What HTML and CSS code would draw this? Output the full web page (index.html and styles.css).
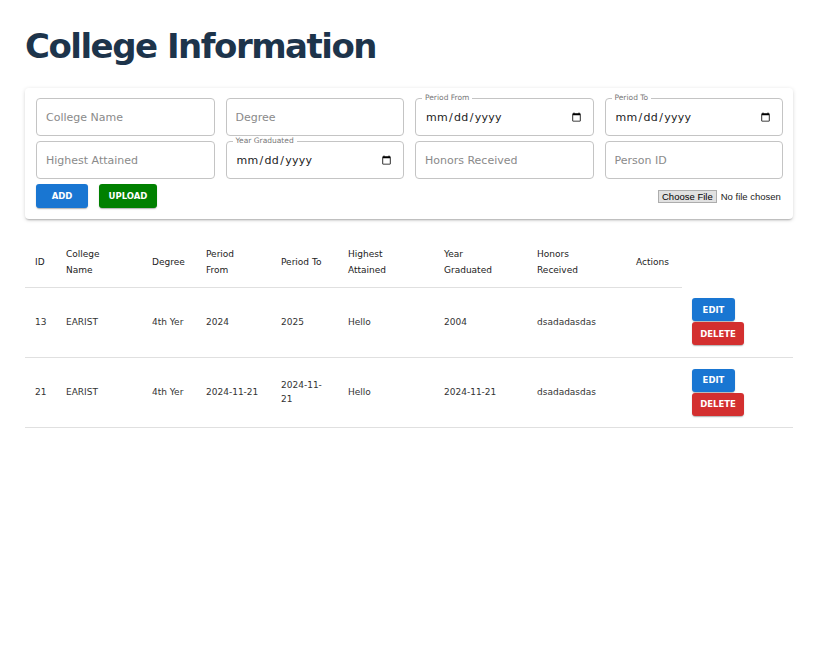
FILE: index.html
```html
<!DOCTYPE html>
<html lang="en">
<head>
<meta charset="utf-8">
<title>College Information</title>
<link rel="stylesheet" href="styles.css">
</head>
<body>
<div class="page">
  <h1 class="title">College Information</h1>
  <form class="card">
    <div class="fields">
      <div class="field"><input class="input" type="text" placeholder="College Name"></div>
      <div class="field"><input class="input" type="text" placeholder="Degree"></div>
      <div class="field"><fieldset class="outline"><legend>Period From</legend></fieldset><input class="input date" type="date"></div>
      <div class="field"><fieldset class="outline"><legend>Period To</legend></fieldset><input class="input date" type="date"></div>
      <div class="field"><input class="input" type="text" placeholder="Highest Attained"></div>
      <div class="field"><fieldset class="outline"><legend>Year Graduated</legend></fieldset><input class="input date" type="date"></div>
      <div class="field"><input class="input" type="text" placeholder="Honors Received"></div>
      <div class="field"><input class="input" type="text" placeholder="Person ID"></div>
    </div>
    <div class="actions">
      <button type="button" class="btn btn-blue">Add</button>
      <button type="button" class="btn btn-green">Upload</button>
      <input class="file" type="file">
    </div>
  </form>

  <table class="table">
    <colgroup>
      <col style="width:31px"><col style="width:86px"><col style="width:54px"><col style="width:75px"><col style="width:67px"><col style="width:96px"><col style="width:93px"><col style="width:99px"><col style="width:56px"><col style="width:111px">
    </colgroup>
    <thead>
      <tr>
        <th><span class="th-label">ID</span></th>
        <th><span class="th-label">College Name</span></th>
        <th><span class="th-label">Degree</span></th>
        <th><span class="th-label">Period From</span></th>
        <th><span class="th-label">Period To</span></th>
        <th><span class="th-label">Highest Attained</span></th>
        <th><span class="th-label">Year Graduated</span></th>
        <th><span class="th-label">Honors Received</span></th>
        <th><span class="th-label">Actions</span></th>
      </tr>
    </thead>
    <tbody>
      <tr>
        <td>13</td><td>EARIST</td><td>4th Yer</td><td>2024</td><td>2025</td><td>Hello</td><td>2004</td><td>dsadadasdas</td><td></td>
        <td><div class="row-btns"><button type="button" class="btn btn-blue sm">Edit</button><button type="button" class="btn btn-red sm">Delete</button></div></td>
      </tr>
      <tr>
        <td>21</td><td>EARIST</td><td>4th Yer</td><td>2024-11-21</td><td>2024-11-21</td><td>Hello</td><td>2024-11-21</td><td>dsadadasdas</td><td></td>
        <td><div class="row-btns"><button type="button" class="btn btn-blue sm">Edit</button><button type="button" class="btn btn-red sm">Delete</button></div></td>
      </tr>
    </tbody>
  </table>
</div>
</body>
</html>
```

FILE: styles.css
```css
* { box-sizing: border-box; }
html, body { margin: 0; background: #fff; }
body { font-family: "DejaVu Sans", "Noto Sans", sans-serif; color: #222; }

.page { padding: 24px 30px 0 25px; }

.title {
  margin: 0 0 20px 0;
  font-family: "DejaVu Sans", sans-serif;
  font-weight: 700;
  font-size: 34px;
  line-height: 44px;
  color: #1d344b;
  letter-spacing: -1.5px;
}

.card {
  background: #fff;
  border-radius: 4px;
  box-shadow: 0 2px 2px -1px rgba(0,0,0,0.25), 0 1px 4px rgba(0,0,0,0.14);
  padding: 10px 10px 11px 11px;
}

.fields {
  display: grid;
  grid-template-columns: repeat(4, 1fr);
  gap: 5px 11px;
}

.field { position: relative; height: 38px; }

.input {
  width: 100%;
  height: 38px;
  border: 1px solid #c4c4c4;
  border-radius: 4px;
  padding: 0 9px;
  font-family: "DejaVu Sans", sans-serif;
  font-size: 11px;
  color: #222;
  background: transparent;
  outline: none;
}
.input::placeholder { color: #8a8a8a; }

.input.date { border-color: transparent; font-size: 11px; letter-spacing: 0.3px; padding-right: 9px; padding-top: 1px; }
.input.date::-webkit-calendar-picker-indicator { width: 11px; height: 11px; margin-left: 0; }

.outline {
  position: absolute;
  inset: -5px 0 0 0;
  margin: 0;
  padding: 0 6px;
  border: 1px solid #c4c4c4;
  border-radius: 4px;
  pointer-events: none;
}
.outline legend {
  padding: 0 3px;
  font-size: 7.5px;
  line-height: 10px;
  color: #777;
}

.actions {
  display: flex;
  align-items: center;
  gap: 11px;
  margin-top: 5px;
}

.btn {
  border: none;
  border-radius: 3px;
  color: #fff;
  font-family: "DejaVu Sans", sans-serif;
  font-weight: 700;
  font-size: 8.5px;
  text-transform: uppercase;
  height: 24px;
  padding: 0;
  box-shadow: 0 2px 1px -1px rgba(0,0,0,0.2), 0 1px 2px rgba(0,0,0,0.14);
  cursor: pointer;
}
.btn-blue { background: #1976d2; }
.btn-green { background: #008000; }
.btn-red { background: #d32f2f; }
.actions .btn-blue { width: 52px; }
.actions .btn-green { width: 58px; }

.file {
  margin-left: auto;
  margin-right: -6px;
  font-family: "Liberation Sans", Arial, sans-serif;
  font-size: 9.5px;
  color: #222;
  width: 131px;
}
.file::file-selector-button {
  font-family: "Liberation Sans", Arial, sans-serif;
  font-size: 9.5px;
  color: #000;
  background: #e1e1e1;
  border: 1px solid #adadad;
  border-radius: 0;
  padding: 0 3px;
  height: 13px;
  margin-right: 4px;
}

.table {
  width: 100%;
  margin-top: 18px;
  border-collapse: collapse;
  table-layout: fixed;
  font-size: 9px;
}
.table th, .table td {
  text-align: left;
  padding: 0 10px;
  border-bottom: 1px solid #e0e0e0;
  color: #222;
  vertical-align: middle;
}
.table th {
  font-weight: 500;
  height: 50px;
  line-height: 16px;
}
.th-label { display: inline-block; max-width: 48px; }
.table td { height: 70px; line-height: 14px; color: #333; }

.row-btns { display: flex; flex-direction: column; align-items: flex-start; gap: 1px; }
.btn.sm { height: 23px; font-size: 8.5px; }
.row-btns .btn-blue { width: 43px; }
.row-btns .btn-red { width: 52px; }
```
